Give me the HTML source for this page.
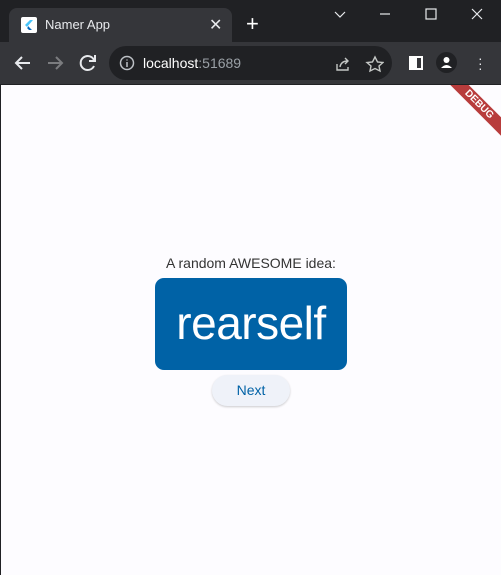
<!DOCTYPE html>
<html><head><style>
body{margin:0;width:501px;height:575px;overflow:hidden;background:#202124;font-family:"Liberation Sans",sans-serif;position:relative}
.abs{position:absolute}
</style></head><body>
<div class="abs" style="left:0;top:0;width:501px;height:42px;background:#202124"></div>
<div class="abs" style="left:9px;top:8px;width:223px;height:34px;background:#35363a;border-radius:8px 8px 0 0"></div>
<div class="abs" style="left:21px;top:17px;width:16px;height:16px;background:#fff;border-radius:2px"></div>
<svg class="abs" style="left:21px;top:17px" width="16" height="16"><path d="M9 3 L4 8 L6 10 L12 3Z" fill="#47c5fb"/><path d="M8 9 L6 11 L8 13 L11 13 L8 10Z" fill="#0569be"/></svg>
<div class="abs" style="left:45px;top:17px;color:#e8eaed;font-size:13px">Namer App</div>
<div class="abs" style="left:209px;top:15px;color:#e8eaed;font-size:16px">✕</div>
<div class="abs" style="left:246px;top:11px;color:#fff;font-size:22px">+</div>
<svg class="abs" style="left:330px;top:8px" width="170" height="20" stroke="#e8eaed" fill="none" stroke-width="1.2"><path d="M5 4 L10 9 L15 4"/><path d="M50 6 H60"/><rect x="96" y="1" width="10" height="10"/><path d="M142 1 L152 11 M152 1 L142 11"/></svg>
<div class="abs" style="left:0;top:42px;width:501px;height:42px;background:#35363a"></div>
<svg class="abs" style="left:10px;top:52px" width="90" height="22" fill="none" stroke-width="2"><path d="M20 11 H6 M12 5 L6 11 L12 17" stroke="#e8eaed"/><path d="M38 11 H52 M46 5 L52 11 L46 17" stroke="#7b7c7f"/><path d="M84 8 A7 7 0 1 0 84 14" stroke="#e8eaed"/><path d="M85 3 V9 H79" stroke="#e8eaed" fill="none"/></svg>
<div class="abs" style="left:109px;top:46px;width:283px;height:34px;background:#202124;border-radius:17px"></div>
<svg class="abs" style="left:119px;top:55px" width="16" height="16"><circle cx="8" cy="8" r="6.5" stroke="#bdc1c6" stroke-width="1.5" fill="none"/><path d="M8 7 V12 M8 4.5 V5.5" stroke="#bdc1c6" stroke-width="1.5"/></svg>
<div class="abs" style="left:143px;top:55px;font-size:14px;color:#fff">localhost<span style="color:#9aa0a6">:51689</span></div>
<svg class="abs" style="left:334px;top:55px" width="50" height="18" fill="none" stroke="#c4c7c5" stroke-width="1.4"><path d="M3 9 V15 H14 V12 M6 12 Q7 6 14 6 M11 3 L14 6 L11 9"/><path d="M41 2 L43.5 7 L49 7.5 L45 11 L46 16 L41 13.5 L36 16 L37 11 L33 7.5 L38.5 7Z"/></svg>
<div class="abs" style="left:409px;top:56px;width:10px;height:10px;border:2px solid #fff;border-left-width:2px"><div style="position:absolute;left:0;top:0;width:6px;height:10px;background:#fff"></div></div>
<div class="abs" style="left:436px;top:52px;width:21px;height:21px;border-radius:50%;background:#202124"></div>
<svg class="abs" style="left:436px;top:52px" width="21" height="21"><circle cx="10.5" cy="8" r="3" fill="#fff"/><path d="M5 16 Q10.5 10 16 16Z" fill="#fff"/></svg>
<div class="abs" style="left:478px;top:56px;width:4px;height:16px;color:#e8eaed;font-size:14px;line-height:5px">·<br>·<br>·</div>
<div class="abs" style="left:1px;top:85px;width:500px;height:490px;background:#fdfcff;overflow:hidden">
 <div class="abs" style="left:420px;top:13px;width:116px;height:13px;background:#b83c3c;transform:rotate(45deg);transform-origin:center;color:#fff;font-size:10px;font-weight:bold;text-align:center;line-height:13px">DEBUG</div>
 <div class="abs" style="left:0;top:170px;width:500px;text-align:center;font-size:14px;color:#333">A random AWESOME idea:</div>
 <div class="abs" style="left:154px;top:193px;width:192px;height:92px;background:#0062a6;border-radius:9px;color:#fff;font-size:46px;text-align:center;line-height:90px;letter-spacing:-0.5px">rearself</div>
 <div class="abs" style="left:211px;top:290px;width:78px;height:31px;background:#eff2f9;border-radius:16px;box-shadow:0 1px 2px rgba(0,0,0,.2);color:#0062a6;font-size:14px;text-align:center;line-height:31px">Next</div>
</div>
</body></html>
